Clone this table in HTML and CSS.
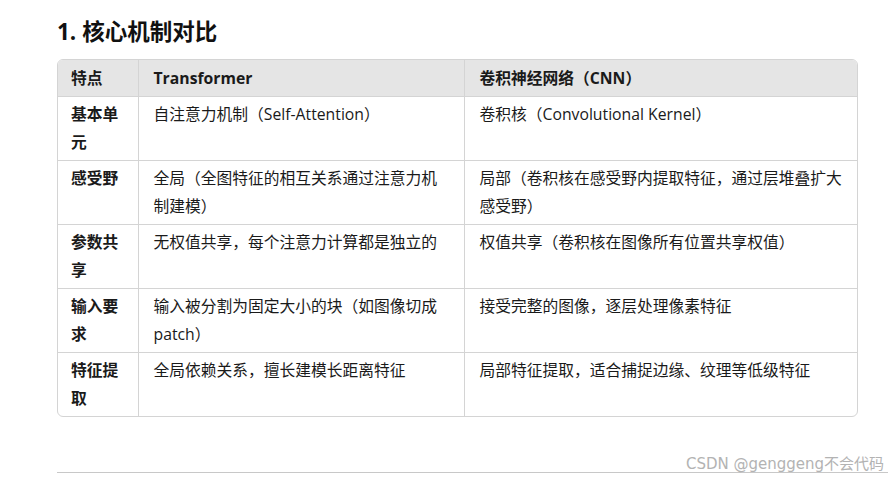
FILE: index.html
```html
<!DOCTYPE html>
<html lang="zh">
<head>
<meta charset="utf-8">
<link rel="stylesheet" href="styles.css">
</head>
<body>
<main class="page">
  <h3 class="title">1. 核心机制对比</h3>
  <div class="table-wrap">
    <table class="cmp">
      <colgroup><col class="c1"><col class="c2"><col class="c3"></colgroup>
      <thead>
        <tr><th>特点</th><th>Transformer</th><th>卷积神经网络（CNN）</th></tr>
      </thead>
      <tbody>
        <tr><td class="key">基本单元</td><td>自注意力机制（Self-Attention）</td><td>卷积核（Convolutional Kernel）</td></tr>
        <tr><td class="key">感受野</td><td>全局（全图特征的相互关系通过注意力机制建模）</td><td>局部（卷积核在感受野内提取特征，通过层堆叠扩大感受野）</td></tr>
        <tr><td class="key">参数共享</td><td>无权值共享，每个注意力计算都是独立的</td><td>权值共享（卷积核在图像所有位置共享权值）</td></tr>
        <tr><td class="key">输入要求</td><td>输入被分割为固定大小的块（如图像切成 patch）</td><td>接受完整的图像，逐层处理像素特征</td></tr>
        <tr><td class="key">特征提取</td><td>全局依赖关系，擅长建模长距离特征</td><td>局部特征提取，适合捕捉边缘、纹理等低级特征</td></tr>
      </tbody>
    </table>
  </div>
  <hr class="rule">
</main>
<div class="watermark">CSDN @genggeng不会代码</div>
</body>
</html>
```
FILE: styles.css
```css
html, body {
  margin: 0;
  padding: 0;
  background: #ffffff;
}
body {
  width: 888px;
  height: 478px;
  overflow: hidden;
  position: relative;
  font-family: "Open Sans", "Noto Sans CJK SC", sans-serif;
  color: #1a1a1a;
}
.page {
  padding: 16px 0 0 57px;
}
.title {
  margin: 0;
  font-size: 22.5px;
  line-height: 32px;
  font-weight: 700;
  color: #111;
}
.table-wrap {
  margin-top: 11px;
  width: 799px;
  border: 1px solid #d4d4d4;
  border-radius: 6px;
  overflow: hidden;
}
.cmp {
  width: 100%;
  border-collapse: collapse;
  table-layout: fixed;
  font-size: 15.75px;
  line-height: 28px;
}
.c1 { width: 80px; }
.c2 { width: 326px; }
.cmp th, .cmp td {
  box-sizing: border-box;
  text-align: left;
  vertical-align: top;
  padding: 3px 14px 4px 15px;
  border-left: 1px solid #d4d4d4;
  border-top: 1px solid #d4d4d4;
}
.cmp th:first-child, .cmp td:first-child {
  border-left: none;
  padding-left: 13px;
  padding-right: 10px;
}
.cmp thead th {
  padding-top: 4px;
  border-top: none;
  background: #e5e5e5;
  font-weight: 700;
  color: #1a1a1a;
}
.cmp td.key {
  font-weight: 700;
}
.cmp tbody tr td {
  height: 63px;
}
.rule {
  margin: 55px 0 0 0;
  border: none;
  border-top: 1px solid #c8c8c8;
  width: 831px;
}
.watermark {
  position: absolute;
  right: 4px;
  top: 452px;
  font-family: "DejaVu Sans", "Noto Sans CJK SC", sans-serif;
  font-size: 15px;
  color: #b3b3b3;
}
```
